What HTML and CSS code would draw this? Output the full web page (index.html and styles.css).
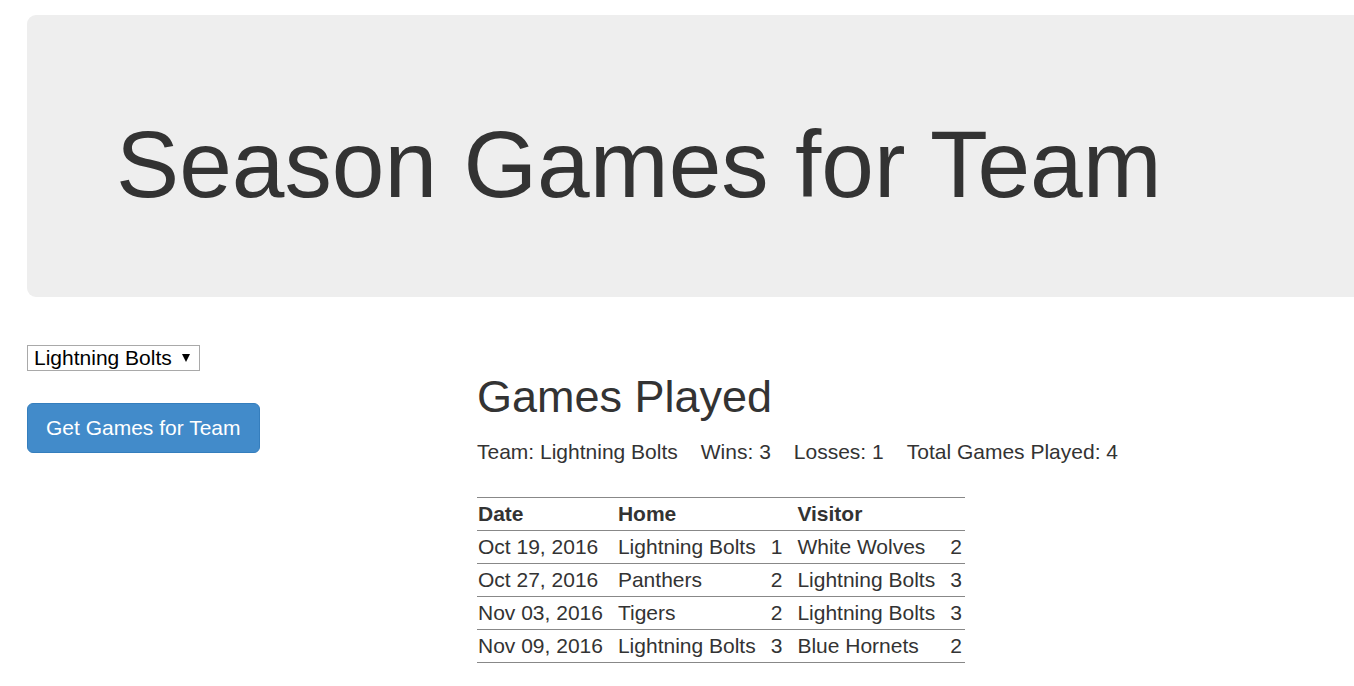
FILE: index.html
```html
<!DOCTYPE html>
<html lang="en">
<head>
<meta charset="utf-8">
<title>Season Games for Team</title>
<link rel="stylesheet" href="styles.css">
</head>
<body>
<div class="page">
  <div class="jumbotron">
    <h1 class="title">Season Games for Team</h1>
  </div>
  <div class="row">
    <div class="side">
      <div class="select-wrap">
        <select class="team-select">
          <option>Lightning Bolts</option>
          <option>White Wolves</option>
          <option>Panthers</option>
          <option>Tigers</option>
          <option>Blue Hornets</option>
        </select>
      </div>
      <button class="btn" type="button">Get Games for Team</button>
    </div>
    <div class="main">
      <h2 class="heading">Games Played</h2>
      <p class="summary">
        <span>Team: Lightning Bolts</span>
        <span>Wins: 3</span>
        <span>Losses: 1</span>
        <span>Total Games Played: 4</span>
      </p>
      <table class="games">
        <thead>
          <tr><th>Date</th><th>Home</th><th></th><th>Visitor</th><th></th></tr>
        </thead>
        <tbody>
          <tr><td>Oct 19, 2016</td><td>Lightning Bolts</td><td>1</td><td>White Wolves</td><td>2</td></tr>
          <tr><td>Oct 27, 2016</td><td>Panthers</td><td>2</td><td>Lightning Bolts</td><td>3</td></tr>
          <tr><td>Nov 03, 2016</td><td>Tigers</td><td>2</td><td>Lightning Bolts</td><td>3</td></tr>
          <tr><td>Nov 09, 2016</td><td>Lightning Bolts</td><td>3</td><td>Blue Hornets</td><td>2</td></tr>
        </tbody>
      </table>
    </div>
  </div>
</div>
</body>
</html>
```
FILE: styles.css
```css
html, body {
  margin: 0;
  padding: 0;
  overflow-x: hidden;
  background: #fff;
}
body {
  font-family: "Liberation Sans", Arial, sans-serif;
  font-size: 21px;
  line-height: 30px;
  color: #333;
}
.page {
  padding: 15px 0 0 27px;
}
.jumbotron {
  background: #eee;
  border-radius: 9px;
  margin-right: -80px;
  padding: 97px 0 81px 89px;
  margin-bottom: 45px;
}
.title {
  margin: 0;
  font-size: 94.7px;
  line-height: 104px;
  font-weight: 500;
  color: #333;
}
.row {
  display: grid;
  grid-template-columns: 450px 1fr;
}
.side {
  display: flex;
  flex-direction: column;
  align-items: flex-start;
}
.select-wrap {
  position: relative;
  margin-top: 3px;
  margin-bottom: 32px;
}
.select-wrap::after {
  content: "";
  position: absolute;
  right: 10px;
  top: 9px;
  width: 0;
  height: 0;
  border-left: 4.5px solid transparent;
  border-right: 4.5px solid transparent;
  border-top: 8px solid #000;
  pointer-events: none;
}
.team-select {
  display: block;
  -webkit-appearance: none;
  appearance: none;
  font-family: "Liberation Sans", Arial, sans-serif;
  font-size: 21px;
  color: #000;
  background: #fff;
  border: 1px solid #a9a9a9;
  border-radius: 0;
  height: 26px;
  width: 173px;
  padding: 0 0 0 6px;
  margin: 0;
  line-height: 24px;
}
.btn {
  font-family: "Liberation Sans", Arial, sans-serif;
  font-size: 21px;
  line-height: 30px;
  padding: 9px 18px;
  color: #fff;
  background: #428bca;
  border: 1px solid #357ebd;
  border-radius: 6px;
  cursor: pointer;
}
.heading {
  font-size: 45px;
  line-height: 49.5px;
  font-weight: 500;
  margin: 30px 0 15px;
  color: #333;
}
.summary {
  margin: 0 0 15px;
  display: flex;
  gap: 23px;
}
.games {
  border-collapse: collapse;
  margin-top: 30px;
}
.games th,
.games td {
  padding: 1px 14px 1px 1px;
  text-align: left;
  border-top: 1px solid #888;
  white-space: nowrap;
  line-height: 30px;
}
.games th {
  font-weight: bold;
}
.games th:last-child,
.games td:last-child {
  padding-right: 3px;
}
.games tbody tr:last-child td {
  border-bottom: 1px solid #888;
}
```
